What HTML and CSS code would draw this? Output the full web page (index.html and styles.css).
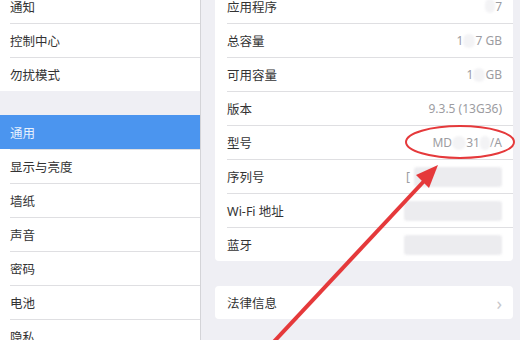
FILE: index.html
```html
<!DOCTYPE html>
<html lang="zh-CN">
<head>
    <meta charset="UTF-8">
    <title>关于本机</title>
    <link rel="stylesheet" href="styles.css">
</head>
<body>

<div class="screen">
    <div class="sidebar">
        <div class="group">
            <div class="row">通知</div>
            <div class="row">控制中心</div>
            <div class="row">勿扰模式</div>
        </div>
        <div class="group">
            <div class="row active">通用</div>
            <div class="row">显示与亮度</div>
            <div class="row">墙纸</div>
            <div class="row">声音</div>
            <div class="row">密码</div>
            <div class="row">电池</div>
            <div class="row">隐私</div>
        </div>
    </div>

    <div class="detail">
        <div class="card">
            <div class="item"><span>应用程序</span><span class="value"><i class="blob w10"></i>7</span></div>
            <div class="item"><span>总容量</span><span class="value">1<i class="blob w12"></i>7 GB</span></div>
            <div class="item"><span>可用容量</span><span class="value">1<i class="blob w12"></i>GB</span></div>
            <div class="item"><span>版本</span><span class="value">9.3.5 (13G36)</span></div>
            <div class="item"><span>型号</span><span class="value">MD<i class="blob w14"></i>31<i class="blob w10"></i>/A</span></div>
            <div class="item"><span>序列号</span><span class="value">[<i class="bar w90"></i></span></div>
            <div class="item"><span>Wi-Fi 地址</span><span class="value"><i class="bar w98"></i></span></div>
            <div class="item"><span>蓝牙</span><span class="value"><i class="bar w98"></i></span></div>
        </div>
        <div class="card legal">
            <div class="item"><span>法律信息</span><span class="chevron">›</span></div>
        </div>
    </div>

    <!-- 标注 -->
    <svg class="mark" width="520" height="340" viewBox="0 0 520 340">
        <ellipse cx="460" cy="142" rx="54" ry="16" fill="none" stroke="#e5393b" stroke-width="2"/>
        <line x1="268" y1="348" x2="426" y2="179" stroke="#e5393b" stroke-width="4"/>
        <polygon points="438,165 429,188 416,175" fill="#e5393b"/>
    </svg>
</div>

</body>
</html>
```

FILE: styles.css
```css
body {
    margin: 0;
    font-family: "Noto Sans", "Noto Sans CJK SC", sans-serif;
    font-size: 12.5px;
    color: #333;
    background-color: #efeff4;
}
.screen {
    display: flex;
    width: 520px;
    height: 340px;
    overflow: hidden;
    position: relative;
}
.sidebar {
    width: 200px;
    flex-shrink: 0;
    margin-top: -11px;
    border-right: 1px solid #d4d4d8;
}
.group {
    background-color: #fff;
    margin-bottom: 24px;
}
.row {
    height: 34px;
    box-sizing: border-box;
    display: flex;
    align-items: center;
    padding-left: 10px;
}
.row + .row {
    background: linear-gradient(#dfdfe2, #dfdfe2) 10px 0 / 100% 1px no-repeat;
}
.row.active {
    background: #4b95ef;
    color: #e8f1fd;
}
.detail {
    flex: 1;
    margin-top: -11px;
    padding: 0 7px 0 14px;
}
.card {
    background-color: #fff;
    border-radius: 4px;
}
.card.legal {
    margin-top: 25px;
}
.item {
    height: 34px;
    box-sizing: border-box;
    margin-left: 12px;
    padding-right: 11px;
    display: flex;
    align-items: center;
    justify-content: space-between;
}
.legal .item {
    height: 33px;
}
.item + .item {
    border-top: 1px solid #dfdfe2;
}
.value {
    color: #9c9ca1;
    font-size: 12px;
    display: flex;
    align-items: center;
}
.blob {
    display: inline-block;
    height: 14px;
    background-color: #f3f3f5;
    border-radius: 7px;
    filter: blur(1px);
}
.bar {
    display: inline-block;
    height: 20px;
    background-color: #ececef;
    border-radius: 3px;
    filter: blur(1px);
    margin-left: 4px;
}
.w10 { width: 10px; }
.w12 { width: 12px; }
.w14 { width: 14px; }
.w90 { width: 88px; }
.w98 { width: 98px; }
.chevron {
    color: #c7c7cc;
    font-size: 18px;
    line-height: 1;
}
.mark {
    position: absolute;
    left: 0;
    top: 0;
    pointer-events: none;
}
```
